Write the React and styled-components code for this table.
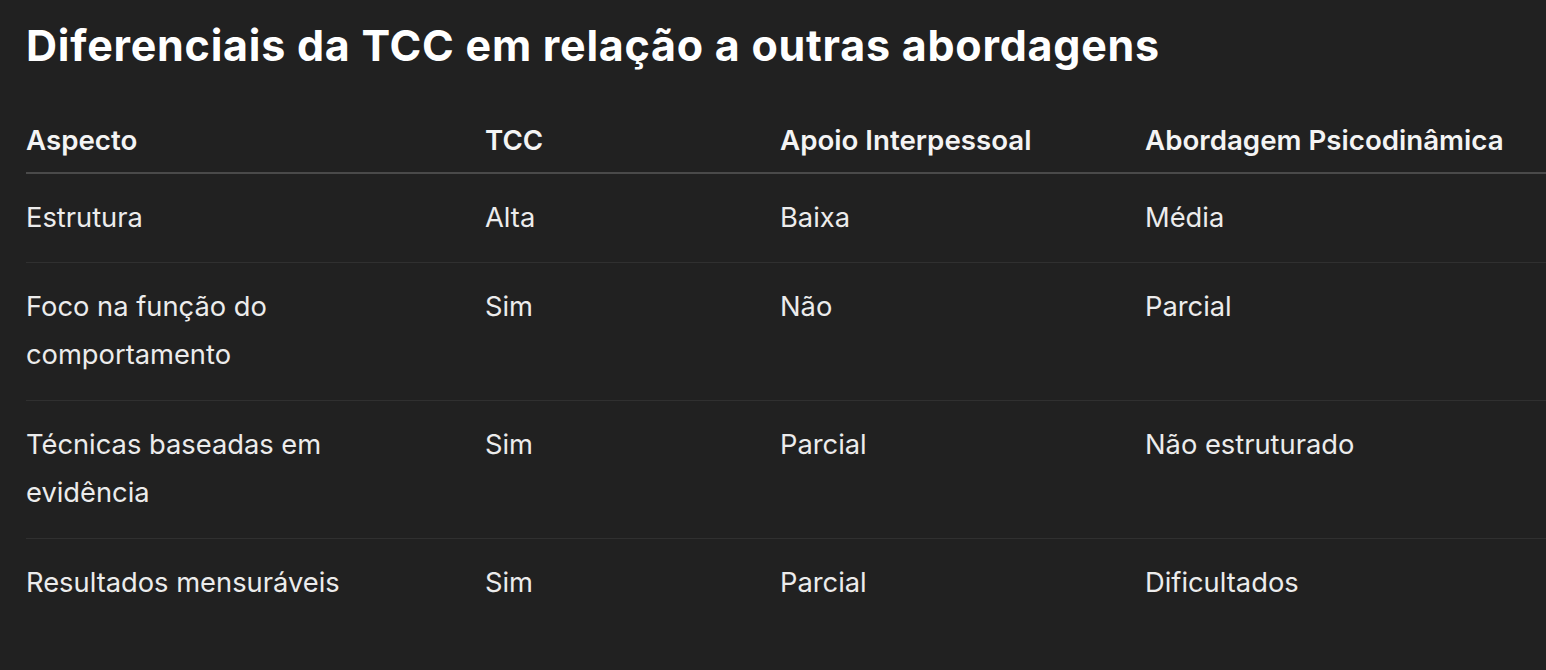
import React from "react";
import styled, { createGlobalStyle } from "styled-components";

const GlobalStyle = createGlobalStyle`
  html, body {
    margin: 0;
    padding: 0;
    background: #212121;
  }
  body {
    font-family: Inter, "Noto Sans", sans-serif;
    color: #ececec;
  }
`;

const Page = styled.div`
  min-height: 670px;
  background: #212121;
  padding: 0 0 0 26px;
  overflow: hidden;
`;

const Title = styled.h2`
  margin: 0;
  padding-top: 17px;
  font-size: 43px;
  line-height: 56px;
  font-weight: 700;
  color: #ffffff;
  letter-spacing: 0.75px;
`;

const Table = styled.table`
  width: 100%;
  border-collapse: collapse;
  table-layout: fixed;
  margin-top: 43px;
  font-size: 27.3px;
  line-height: 48px;
`;

const Col = styled.col`
  width: ${(props) => props.$w || "auto"};
`;

const HeadCell = styled.th`
  text-align: left;
  font-size: 27.7px;
  font-weight: 600;
  color: #f4f4f4;
  padding: 0 0 8px;
  border-bottom: 2px solid #4a4a4a;
`;

const Row = styled.tr`
  border-bottom: 1px solid #303030;
  &:last-child {
    border-bottom: none;
  }
`;

const Cell = styled.td`
  vertical-align: top;
  padding: 20px 40px ${(props) => (props.$tall ? "21px" : "20px")} 0;
  font-weight: 400;
  color: #ececec;
`;

const rows = [
  ["Estrutura", "Alta", "Baixa", "Média"],
  ["Foco na função do comportamento", "Sim", "Não", "Parcial"],
  ["Técnicas baseadas em evidência", "Sim", "Parcial", "Não estruturado"],
  ["Resultados mensuráveis", "Sim", "Parcial", "Dificultados"],
];

export default function App() {
  return (
    <>
      <GlobalStyle />
      <Page>
        <Title>Diferenciais da TCC em relação a outras abordagens</Title>
        <Table>
          <colgroup>
            <Col $w="459px" />
            <Col $w="295px" />
            <Col $w="365px" />
            <Col />
          </colgroup>
          <thead>
            <tr>
              <HeadCell>Aspecto</HeadCell>
              <HeadCell>TCC</HeadCell>
              <HeadCell>Apoio Interpessoal</HeadCell>
              <HeadCell>Abordagem Psicodinâmica</HeadCell>
            </tr>
          </thead>
          <tbody>
            {rows.map((r, i) => (
              <Row key={i}>
                {r.map((c, j) => (
                  <Cell key={j} $tall={i === 1 || i === 2}>
                    {c}
                  </Cell>
                ))}
              </Row>
            ))}
          </tbody>
        </Table>
      </Page>
    </>
  );
}
